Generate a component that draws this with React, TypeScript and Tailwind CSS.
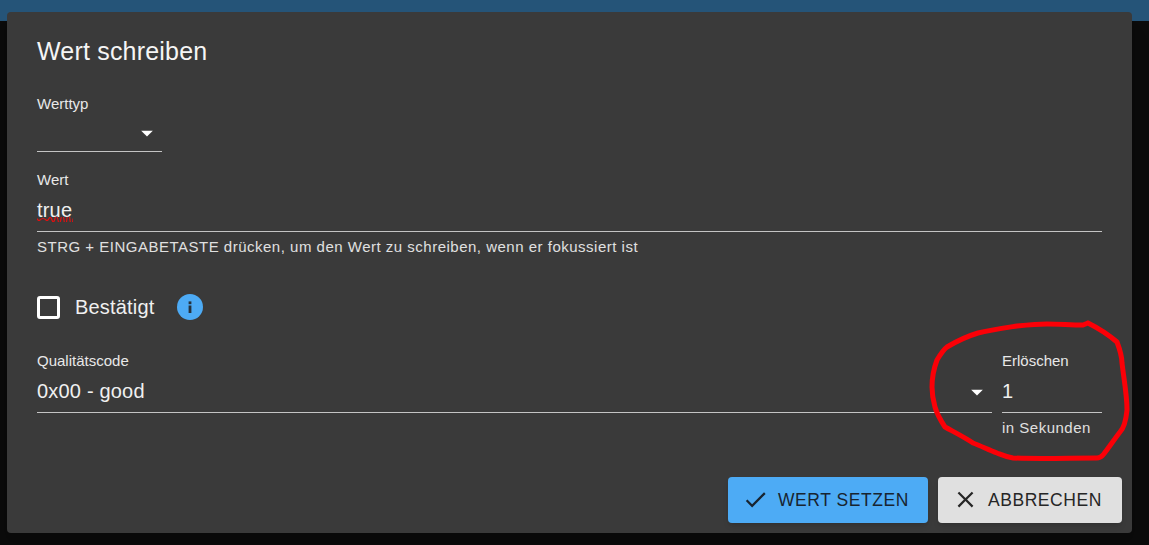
import React from "react";

const Caret = ({ className = "" }: { className?: string }) => (
  <svg width="28" height="28" viewBox="0 0 24 24" className={className} fill="#fff">
    <path d="M7 10l5 5 5-5z" />
  </svg>
);

export default function App() {
  return (
    <div className="relative h-[545px] w-[1149px] overflow-hidden bg-[#0b0b0b] font-['Liberation_Sans',sans-serif] text-white">
      <div className="h-[21px] bg-[#255478]" />
      <div className="absolute left-[7px] top-[12px] flex h-[521px] w-[1125px] flex-col rounded bg-[#3a3a3a] shadow-xl">
        <h2 className="pl-[30px] pt-[24px] text-[25px] leading-[31px] font-normal tracking-[0.19px] text-[#f5f5f5]">
          Wert schreiben
        </h2>
        <div className="flex flex-col pl-[30px] pr-[30px]">
          <label className="mt-[27px] text-[15px] leading-[20px] text-[#e8e8e8]">Werttyp</label>
          <div className="flex h-[38px] w-[125px] items-center justify-end border-b border-[#c4c4c4]">
            <Caret className="mr-px" />
          </div>
          <label className="mt-[18px] text-[15px] leading-[20px] text-[#e8e8e8]">Wert</label>
          <div className="flex h-[42px] items-center border-b border-[#c4c4c4] pb-[2px] text-[20px] tracking-[0.19px] text-[#f0f0f0]">
            <span className="relative">
              true
              <svg className="absolute left-0 top-[22px]" width="36" height="5" viewBox="0 0 36 5" fill="none">
                <path
                  d="M0 1.5 Q1.5 4.5 3 3 T6 1.5 T9 3 T12 1.5 T15 3 T18 1.5 T21 3 T24 1.5 T27 3 T30 1.5 T33 3 T36 1.5"
                  stroke="#e01010"
                  strokeWidth="1.2"
                />
              </svg>
            </span>
          </div>
          <p className="mt-[5px] text-[15px] leading-[20px] tracking-[0.5px] text-[#e0e0e0]">
            STRG + EINGABETASTE drücken, um den Wert zu schreiben, wenn er fokussiert ist
          </p>
          <div className="mt-[32px] flex h-[36px] items-center">
            <span className="h-[23px] w-[23px] rounded-[3px] border-[3px] border-white" />
            <span className="ml-[15px] text-[20px] tracking-[0.19px] text-[#f0f0f0]">Bestätigt</span>
            <span className="ml-[22px] flex h-[26px] w-[26px] items-center justify-center rounded-full bg-[#4dabf5]">
              <svg width="26" height="26" viewBox="0 0 26 26" fill="#26323c">
                <rect x="11.6" y="11.5" width="2.8" height="7.5" />
                <rect x="11.6" y="7.4" width="2.8" height="2.8" />
              </svg>
            </span>
          </div>
          <div className="mt-[26px] flex gap-[10px]">
            <div className="flex-1">
              <label className="block text-[15px] leading-[20px] text-[#e8e8e8]">Qualitätscode</label>
              <div className="flex h-[42px] items-center justify-between border-b border-[#c4c4c4] text-[20px] tracking-[0.19px] text-[#f0f0f0]">
                <span className="-mt-[2px]">0x00 - good</span>
                <Caret className="mr-px" />
              </div>
            </div>
            <div className="w-[100px]">
              <label className="block text-[15px] leading-[20px] text-[#e8e8e8]">Erlöschen</label>
              <div className="flex h-[42px] items-center border-b border-[#c4c4c4] pb-[2px] text-[20px] text-[#f0f0f0]">1</div>
              <p className="mt-[5px] text-[15px] leading-[20px] tracking-[0.5px] text-[#e0e0e0]">in Sekunden</p>
            </div>
          </div>
        </div>
        <div className="mt-auto flex justify-end gap-[10px] pb-[10px] pr-[10px]">
          <button className="flex h-[46px] w-[200px] items-center gap-[9px] rounded bg-[#4dabf5] pl-[14px] text-[17.5px] tracking-[0.55px] text-[#182430] shadow-md">
            <svg className="-mt-[2px]" width="27" height="27" viewBox="0 0 24 24" fill="#182430">
              <path d="M9 16.17 4.83 12l-1.42 1.41L9 19 21 7l-1.41-1.41z" />
            </svg>
            WERT SETZEN
          </button>
          <button className="flex h-[46px] w-[184px] items-center gap-[9px] rounded bg-[#e0e0e0] pl-[14px] text-[17.5px] tracking-[0.55px] text-[#262626] shadow-md">
            <svg className="-mt-[2px]" width="27" height="27" viewBox="0 0 24 24" fill="#262626">
              <path d="M19 6.41 17.59 5 12 10.59 6.41 5 5 6.41 10.59 12 5 17.59 6.41 19 12 13.41 17.59 19 19 17.59 13.41 12z" />
            </svg>
            ABBRECHEN
          </button>
        </div>
      </div>
      <svg className="pointer-events-none absolute left-0 top-0" width="1149" height="545" viewBox="0 0 1149 545" fill="none">
        <path
          d="M1088 323 C1098 328 1110 336 1117 342 C1120 350 1122 356 1122 363 C1124 380 1127 395 1127 410 C1126 420 1124 428 1120 432 C1113 441 1108 449 1103 455 C1101 457 1099 458 1097 458 C1070 458 1040 459 1013 458 C1006 457 1002 455 997 453 C989 450 981 446 973 443 C964 437 954 432 945 427 C941 421 937 414 935 407 C933 400 932 394 932 387 C932 378 934 368 937 360 C940 355 943 350 947 347 C957 341 968 336 978 333 C990 330 1004 328 1017 326 C1027 325 1037 324 1047 324 C1059 324 1071 325 1083 325 L1088 323"
          stroke="#fb0007"
          strokeWidth="5"
          strokeLinecap="round"
          strokeLinejoin="round"
        />
      </svg>
    </div>
  );
}
